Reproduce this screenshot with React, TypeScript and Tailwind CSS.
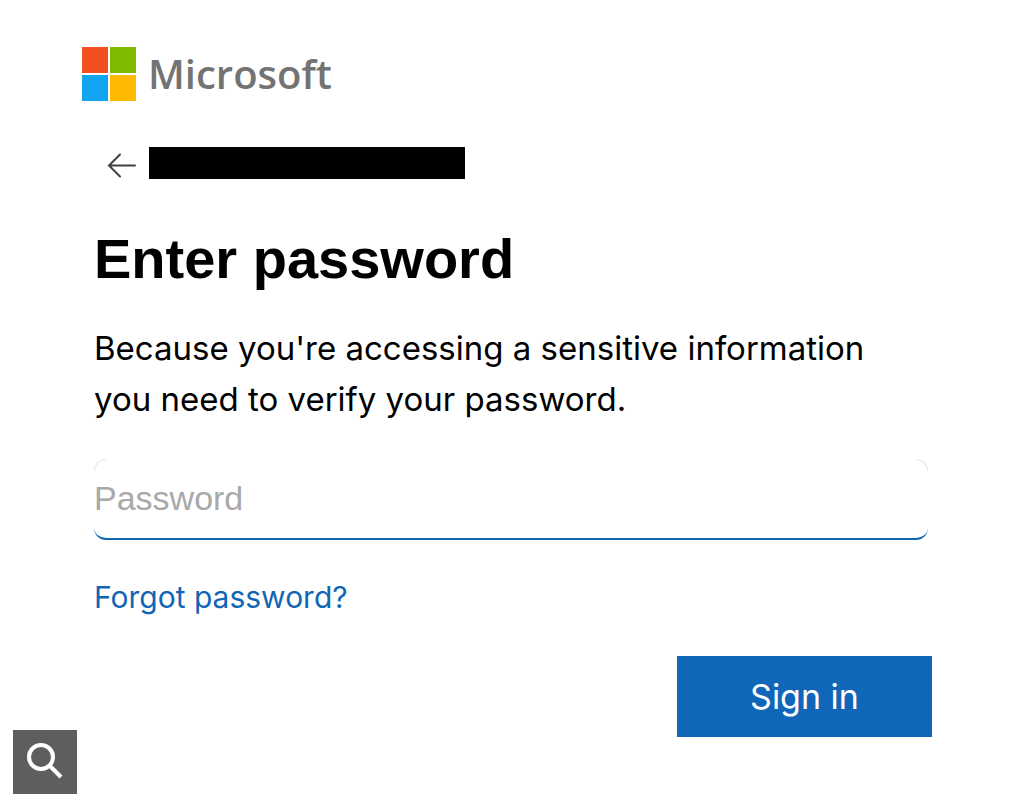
import { useState } from "react";

const LOGO_TILES = [
  { x: 0, y: 0, fill: "#f25022" },
  { x: 28, y: 0, fill: "#7fba00" },
  { x: 0, y: 28, fill: "#13a4ef" },
  { x: 28, y: 28, fill: "#ffb900" },
];

function Logo() {
  return (
    <div className="flex items-center gap-3 pl-[82px]">
      <svg viewBox="0 0 54 54" className="size-[54px]" aria-hidden="true">
        {LOGO_TILES.map((t) => (
          <rect key={t.fill} x={t.x} y={t.y} width="26" height="26" fill={t.fill} />
        ))}
      </svg>
      <span className="font-['Open_Sans',sans-serif] text-[40px] leading-[54px] font-semibold text-[#737373]">
        Microsoft
      </span>
    </div>
  );
}

export default function App() {
  const [password, setPassword] = useState("");

  return (
    <main className="min-h-screen bg-white pt-[47px] pb-[60px] font-[Inter,sans-serif] text-black">
      <Logo />

      <form
        className="pr-24 pl-[94px]"
        onSubmit={(e) => e.preventDefault()}
      >
        <div className="mt-[46px] flex items-center gap-3 pl-[13px]">
          <button type="button" aria-label="Back">
            <svg
              viewBox="0 0 30 32"
              className="h-8 w-[30px]"
              fill="none"
              stroke="#404040"
              strokeWidth="2"
              strokeLinecap="round"
            >
              <path d="M28 18.5H2M13 7.5L2 18.5L13 29.5" />
            </svg>
          </button>
          {/* redacted account name */}
          <div className="h-8 w-[316px] bg-black" />
        </div>

        <h1 className="mt-12 font-['Liberation_Sans',sans-serif] text-[56px] leading-[64px] font-bold">
          Enter password
        </h1>
        <p className="mt-8 max-w-[800px] text-[33px] leading-[51px]">
          Because you're accessing a sensitive information you need to verify
          your password.
        </p>

        <div className="relative mt-[34px]">
          <input
            type="password"
            aria-label="Password"
            placeholder="Password"
            value={password}
            onChange={(e) => setPassword(e.target.value)}
            className="block h-[81px] w-full rounded-xl border-b-2 border-[#1066b5] font-['Liberation_Sans',sans-serif] text-[34px] outline-none placeholder:text-[#a9a9a9]"
          />
          <span className="absolute top-0 left-0 size-3 rounded-tl-xl border-t border-l border-[#dbe8f4]" />
          <span className="absolute top-0 right-0 size-3 rounded-tr-xl border-t border-r border-[#dbe8f4]" />
        </div>

        <a
          href="#"
          className="mt-[34px] inline-block text-[30px] leading-[46px] text-[#1066b5]"
        >
          Forgot password?
        </a>

        <div className="mt-9 -mr-1 flex justify-end">
          <button
            type="submit"
            className="h-[81px] w-[255px] bg-[#1066b8] text-[34px] text-white"
          >
            Sign in
          </button>
        </div>
      </form>

      <button
        type="button"
        aria-label="Search"
        className="fixed bottom-1 left-[13px] size-16 bg-[#5e5e5e]"
      >
        <svg
          viewBox="0 0 64 64"
          className="size-16"
          fill="none"
          stroke="white"
          strokeWidth="4"
        >
          <circle cx="28" cy="27" r="12" />
          <path d="M36.5 35.5L48 47" />
        </svg>
      </button>
    </main>
  );
}
